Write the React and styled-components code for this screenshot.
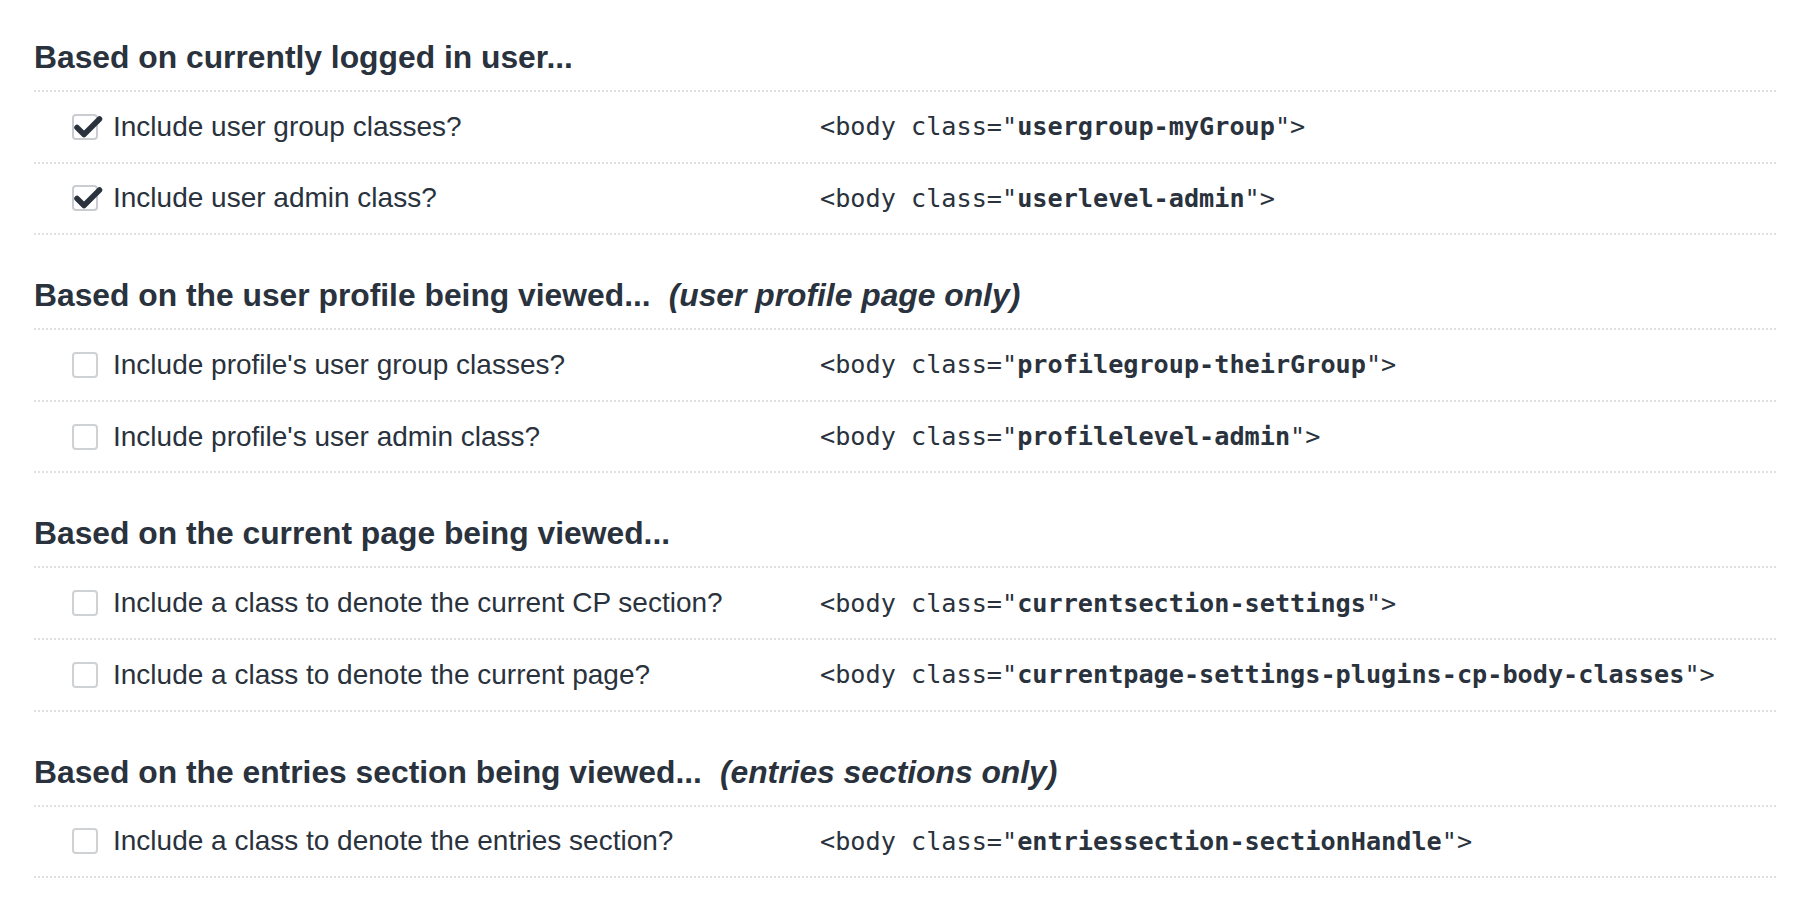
import React from "react";
import styled, { createGlobalStyle } from "styled-components";

const GlobalStyle = createGlobalStyle`
  html, body {
    margin: 0;
    padding: 0;
    background: #fff;
  }
  body {
    font-family: "Liberation Sans", Arial, sans-serif;
    color: #29323d;
  }
`;

const Page = styled.div`
  padding: 39px 36px 40px 34px;
`;

const Section = styled.section`
  & + & {
    margin-top: 42px;
  }
`;

const Heading = styled.h2`
  margin: 0;
  padding-bottom: 15px;
  font-size: 31.8px;
  line-height: 36px;
  font-weight: bold;
  color: #29323d;
  border-bottom: 2px dotted #dfe1e4;
`;

const Note = styled.em`
  margin-left: 18px;
  font-style: italic;
`;

const Row = styled.div`
  display: grid;
  grid-template-columns: 748px 1fr;
  align-items: center;
  height: 69.6px;
  padding-left: 38px;
  border-bottom: 2px dotted #dfe1e4;
`;

const Label = styled.label`
  display: flex;
  align-items: center;
  gap: 15px;
  font-size: 28px;
  color: #29323d;
`;

const Box = styled.span`
  position: relative;
  flex: none;
  width: 26px;
  height: 26px;
  box-sizing: border-box;
  border: 2px solid ${(p) => (p.checked ? "#c9ccd0" : "#cfd2d5")};
  border-radius: 4px;
  background: #fff;
`;

const Tick = styled.svg`
  position: absolute;
  left: 0;
  top: 0;
  overflow: visible;
`;

const Code = styled.code`
  font-family: "DejaVu Sans Mono", "Liberation Mono", monospace;
  font-size: 25.2px;
  color: #29323d;
  white-space: nowrap;

  b {
    font-weight: bold;
  }
`;

const sections = [
  {
    title: "Based on currently logged in user...",
    rows: [
      { label: "Include user group classes?", cls: "usergroup-myGroup", checked: true },
      { label: "Include user admin class?", cls: "userlevel-admin", checked: true },
    ],
  },
  {
    title: "Based on the user profile being viewed...",
    note: "(user profile page only)",
    rows: [
      { label: "Include profile's user group classes?", cls: "profilegroup-theirGroup" },
      { label: "Include profile's user admin class?", cls: "profilelevel-admin" },
    ],
  },
  {
    title: "Based on the current page being viewed...",
    rows: [
      { label: "Include a class to denote the current CP section?", cls: "currentsection-settings" },
      {
        label: "Include a class to denote the current page?",
        cls: "currentpage-settings-plugins-cp-body-classes",
      },
    ],
  },
  {
    title: "Based on the entries section being viewed...",
    note: "(entries sections only)",
    rows: [
      { label: "Include a class to denote the entries section?", cls: "entriessection-sectionHandle" },
    ],
  },
];

const Checkbox = ({ checked }) => (
  <Box checked={checked}>
    {checked && (
      <Tick width="28" height="24" viewBox="0 0 28 24">
        <path
          d="M3 11.5 L10 18.5 L25.5 3"
          fill="none"
          stroke="#29323d"
          strokeWidth="5.5"
          strokeLinecap="round"
          strokeLinejoin="round"
        />
      </Tick>
    )}
  </Box>
);

const App = () => {
  return (
    <Page>
      <GlobalStyle />
      {sections.map((s) => (
        <Section key={s.title}>
          <Heading>
            {s.title}
            {s.note && <Note>{s.note}</Note>}
          </Heading>
          {s.rows.map((r) => (
            <Row key={r.cls}>
              <Label>
                <Checkbox checked={r.checked} />
                {r.label}
              </Label>
              <Code>
                &lt;body class="<b>{r.cls}</b>"&gt;
              </Code>
            </Row>
          ))}
        </Section>
      ))}
    </Page>
  );
};

export default App;
